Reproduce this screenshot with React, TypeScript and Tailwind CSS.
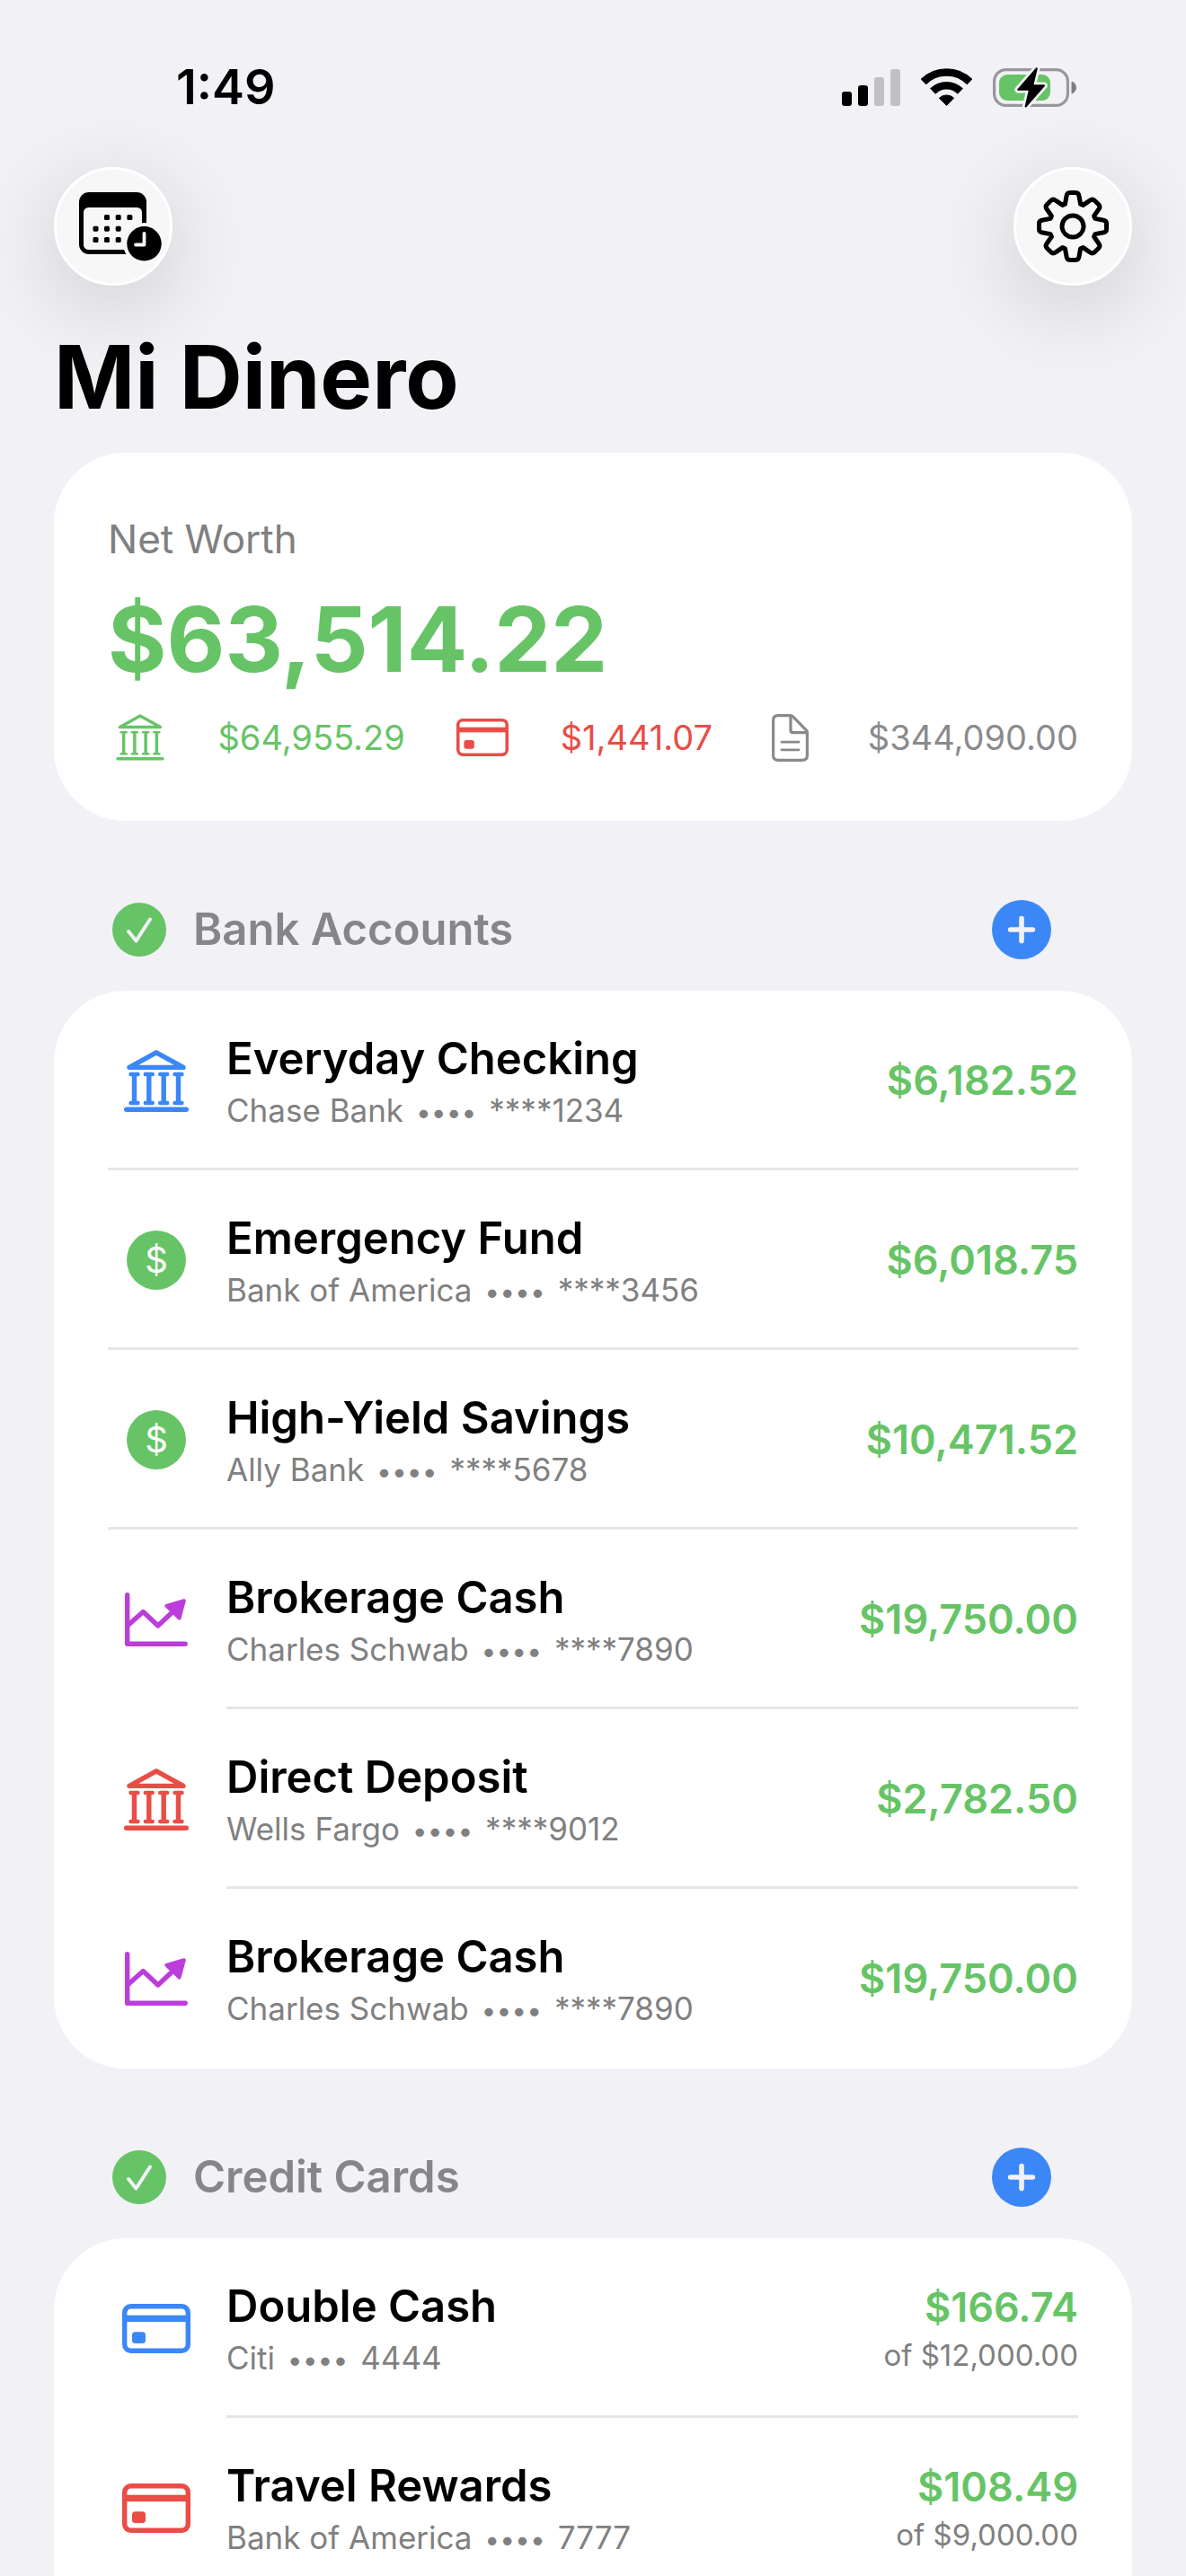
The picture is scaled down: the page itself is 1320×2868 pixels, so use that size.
import clsx from "clsx";

type IconProps = { className?: string; weight?: number };

const accounts = [
  { name: "Everyday Checking", bank: "Chase Bank", number: "****1234", amount: "$6,182.52", icon: "bank", color: "text-[#3b87f7]" },
  { name: "Emergency Fund", bank: "Bank of America", number: "****3456", amount: "$6,018.75", icon: "coin", color: "text-[#66c466]" },
  { name: "High-Yield Savings", bank: "Ally Bank", number: "****5678", amount: "$10,471.52", icon: "coin", color: "text-[#66c466]" },
  { name: "Brokerage Cash", bank: "Charles Schwab", number: "****7890", amount: "$19,750.00", icon: "chart", color: "text-[#bb3edb]", inset: true },
  { name: "Direct Deposit", bank: "Wells Fargo", number: "****9012", amount: "$2,782.50", icon: "bank", color: "text-[#ea4c46]", inset: true },
  { name: "Brokerage Cash", bank: "Charles Schwab", number: "****7890", amount: "$19,750.00", icon: "chart", color: "text-[#bb3edb]", inset: true },
];

const cards = [
  { name: "Double Cash", bank: "Citi", number: "4444", amount: "$166.74", limit: "of $12,000.00", icon: "card", color: "text-[#3b87f7]", inset: true },
  { name: "Travel Rewards", bank: "Bank of America", number: "7777", amount: "$108.49", limit: "of $9,000.00", icon: "card", color: "text-[#ea4c46]", inset: true },
];

function BankIcon({ className, weight = 5.4 }: IconProps) {
  return (
    <svg viewBox="0 0 72 69" className={className} fill="none" stroke="currentColor" strokeWidth={weight} strokeLinejoin="round" strokeLinecap="round" aria-hidden="true">
      <path d="M36 2.8 L6 19.4 H66 Z" />
      <path d="M2.7 66.3 H69.3" />
      {[11.5, 27.8, 44.2, 60.5].map((x) => (
        <g key={x}>
          <path d={`M${x} 28 V58`} />
          <path d={`M${x - 4} 27 H${x + 4} M${x - 4} 59 H${x + 4}`} strokeWidth={weight - 1} />
        </g>
      ))}
    </svg>
  );
}

function CardIcon({ className, weight = 5.4 }: IconProps) {
  return (
    <svg viewBox="0 0 76 55" className={className} fill="none" stroke="currentColor" strokeWidth={weight} aria-hidden="true">
      <rect x={weight / 2} y={weight / 2} width={76 - weight} height={55 - weight} rx="7" />
      <rect x="2" y="12.7" width="72" height="7.4" fill="currentColor" stroke="none" />
      <rect x="11" y="31.3" width="15" height="12.8" rx="3.5" fill="currentColor" stroke="none" />
    </svg>
  );
}

function ChartIcon() {
  return (
    <svg viewBox="0 0 70 60" className="w-[70px]" fill="none" stroke="currentColor" strokeWidth="5.4" strokeLinejoin="round" strokeLinecap="round" aria-hidden="true">
      <path d="M2.7 2.7 V57.2 H67.2" />
      <path d="M4 36 L20.3 21.5 L36.8 37 L56 19" />
      <path d="M46.3 14.8 L65.8 9.2 L60.6 28.6 Z" fill="currentColor" strokeWidth="4" />
    </svg>
  );
}

function DocIcon() {
  return (
    <svg viewBox="0 0 41 53" className="w-[41px]" fill="none" stroke="currentColor" strokeWidth="3.2" strokeLinejoin="round" strokeLinecap="round" aria-hidden="true">
      <path d="M7 1.6 H20.5 Q22.3 1.6 23.6 2.9 L38 17.6 Q39.4 19 39.4 21 V46 Q39.4 51.4 34 51.4 H7 Q1.6 51.4 1.6 46 V7 Q1.6 1.6 7 1.6 Z" />
      <path d="M21 2 V18 Q21 20.7 23.7 20.7 H39" />
      <path d="M11 31.2 H30 M11 39.8 H30" strokeWidth="2.8" />
    </svg>
  );
}

function CoinIcon() {
  return <span className="flex size-[66px] items-center justify-center rounded-full bg-[#66c466] text-[40px] leading-none text-white">$</span>;
}

function CalendarIcon() {
  const dots = [[31, 28], [43.7, 28], [56.4, 28], [18.5, 40.7], [31, 40.7], [43.7, 40.7], [18.5, 53], [31, 53], [43.7, 53]];
  return (
    <svg viewBox="-16 0 108 77" className="w-[108px]" aria-hidden="true">
      <rect width="75" height="69" rx="11" />
      <rect x="5" y="17" width="65" height="47" rx="5.5" fill="#f7f7f8" />
      {dots.map(([x, y]) => (
        <rect key={`${x}-${y}`} x={x - 3} y={y - 3} width="6" height="6" rx="1.6" />
      ))}
      <circle cx="72.5" cy="57.3" r="23.3" fill="#f7f7f8" />
      <circle cx="72.5" cy="57.3" r="19.2" />
      <path d="M72.5 45.8 V58.5 H63" fill="none" stroke="#f7f7f8" strokeWidth="3.8" strokeLinecap="round" strokeLinejoin="round" />
    </svg>
  );
}

// one tooth of the gear, repeated every 45 degrees
const tooth = [[-8.6, -24.8], [-7, -33.5], [-6.5, -37.5], [-3.2, -37.5], [3.2, -37.5], [6.5, -37.5], [7, -33.5], [8.6, -24.8]];

function gearPath() {
  let d = "";
  for (let i = 0; i < 8; i++) {
    const a = (i * Math.PI) / 4;
    const p = tooth.map(([x, y]) => `${(x * Math.cos(a) - y * Math.sin(a)).toFixed(2)} ${(x * Math.sin(a) + y * Math.cos(a)).toFixed(2)}`);
    d += `${i === 0 ? "M" : "L"}${p[0]} L${p[1]} Q${p[2]} ${p[3]} L${p[4]} Q${p[5]} ${p[6]} L${p[7]} `;
  }
  return d + "Z";
}

function GearIcon() {
  return (
    <svg viewBox="-40 -40 80 80" className="w-20" fill="none" stroke="black" strokeWidth="5" strokeLinejoin="round" aria-hidden="true">
      <path d={gearPath()} />
      <circle r="12" />
    </svg>
  );
}

function StatusIcons() {
  return (
    <div className="flex items-center gap-[23px]">
      <svg viewBox="0 0 65 41" className="w-[65px]" aria-hidden="true">
        <rect y="25" width="11" height="16" rx="3" />
        <rect x="18" y="18" width="11" height="23" rx="3" />
        <rect x="36" y="9" width="11" height="32" rx="3" fill="#c1c0c5" />
        <rect x="54" width="11" height="41" rx="3" fill="#c1c0c5" />
      </svg>
      <svg viewBox="0 0 57 42" className="w-[57px]" fill="none" stroke="black" aria-hidden="true">
        <path d="M2.7 15.2 A36.5 36.5 0 0 1 54.3 15.2" strokeWidth="8.6" />
        <path d="M13.1 25.6 A21.7 21.7 0 0 1 43.9 25.6" strokeWidth="8.6" />
        <path d="M28.5 41.4 L20.4 33.2 A11.6 11.6 0 0 1 36.6 33.2 Z" fill="black" strokeWidth="1" strokeLinejoin="round" />
      </svg>
      <svg viewBox="0 0 93 43" className="w-[93px] overflow-visible" aria-hidden="true">
        <rect x="1.6" y="1.6" width="81.8" height="39.8" rx="13" fill="none" stroke="#98979b" strokeWidth="3.2" />
        <path d="M88 15 A7 7 0 0 1 88 28 Z" fill="#7f7f83" stroke="#7f7f83" />
        <rect x="7" y="7" width="57" height="29" rx="9" fill="#66c466" />
        <path d="M48.8 0.2 L28.2 23.8 H41 L36.6 42.6 L57 19.3 H44.2 Z" stroke="#f2f1f6" strokeWidth="7.5" strokeLinejoin="round" />
        <path d="M48.8 0.2 L28.2 23.8 H41 L36.6 42.6 L57 19.3 H44.2 Z" stroke="black" strokeWidth="2" strokeLinejoin="round" />
      </svg>
    </div>
  );
}

function RowIcon({ icon }: { icon: string }) {
  if (icon === "bank") return <BankIcon className="w-[72px]" />;
  if (icon === "card") return <CardIcon className="w-[76px]" />;
  if (icon === "chart") return <ChartIcon />;
  return <CoinIcon />;
}

function AccountRow({ ...props }) {
  const { name, bank, number, amount, limit, icon, color, inset, last } = props;
  const line = "border-b-[3px] border-[#e6e6e6]";

  return (
    <li className={clsx("flex h-[200px] gap-6", !last && !inset && line)}>
      <div className={clsx("flex w-[108px] items-center justify-center", color, !last && !inset && "pt-[3px]")}>
        <RowIcon icon={icon} />
      </div>
      <div className={clsx("flex flex-1 items-center justify-between", !last && "pt-[3px]", !last && inset && line)}>
        <div>
          <h3 className="text-[49px] leading-[66px] font-semibold text-black">{name}</h3>
          <p className="text-[35px] leading-[48px] text-[#808080]">
            {bank} <span className="mx-1 text-[30px] leading-none">••••</span> {number}
          </p>
        </div>
        <div className="text-right">
          <p className="text-[45px] leading-[60px] font-semibold text-[#66c466]">{amount}</p>
          {limit && <p className="text-[33px] leading-[46px] text-[#808080]">{limit}</p>}
        </div>
      </div>
    </li>
  );
}

function Section({ title, rows, open }: { title: string; rows: object[]; open?: boolean }) {
  return (
    <section>
      <div className="flex items-center justify-between pt-[88px] pr-[90px] pb-[35px] pl-[65px]">
        <div className="flex items-center gap-[30px]">
          <svg viewBox="0 0 60 60" className="w-[60px]" aria-hidden="true">
            <circle cx="30" cy="30" r="30" fill="#66c466" />
            <path d="M18 32 L26.5 42.5 L42 18.5" fill="none" stroke="#f2f1f6" strokeWidth="4" strokeLinecap="round" strokeLinejoin="round" />
          </svg>
          <h2 className="text-[49px] leading-[60px] font-semibold text-[#86858a]">{title}</h2>
        </div>
        <button aria-label={`Add to ${title}`} className="rounded-full">
          <svg viewBox="0 0 66 66" className="w-[66px]" aria-hidden="true">
            <circle cx="33" cy="33" r="33" fill="#3b87f7" />
            <path d="M33 20.6 V45.4 M20.6 33 H45.4" stroke="#f2f1f6" strokeWidth="5.6" strokeLinecap="round" />
          </svg>
        </button>
      </div>
      <ul className={clsx("bg-white px-[60px]", open ? "rounded-t-[80px]" : "rounded-[80px]")}>
        {rows.map((row, i) => (
          <AccountRow key={i} {...row} last={!open && i === rows.length - 1} />
        ))}
      </ul>
    </section>
  );
}

function RoundButton({ label, children }: { label: string; children: React.ReactNode }) {
  return (
    <button aria-label={label} className="flex size-[132px] items-center justify-center rounded-full border-[3px] border-white bg-[#f7f7f8] shadow-[0_22px_100px_rgba(0,0,0,0.16)]">
      {children}
    </button>
  );
}

export default function App() {
  return (
    <div className="h-screen overflow-y-auto bg-[#f2f1f6] px-[60px] font-['Inter',sans-serif] text-black [scrollbar-width:none]">
      <div className="flex items-center justify-between pt-[66px] pr-[62px] pb-[58px] pl-[136px]">
        <span className="text-[54px] leading-[62px] font-semibold">1:49</span>
        <StatusIcons />
      </div>
      <header>
        <div className="flex justify-between">
          <RoundButton label="Scheduled">
            <CalendarIcon />
          </RoundButton>
          <RoundButton label="Settings">
            <GearIcon />
          </RoundButton>
        </div>
        <h1 className="mt-[42px] mb-6 text-[97px] leading-[120px] font-bold">Mi Dinero</h1>
      </header>
      <main>
        <section className="rounded-[80px] bg-white px-[60px] pt-[70px] pb-[67px]">
          <h2 className="text-[44px] leading-[52px] text-[#808080]">Net Worth</h2>
          <p className="mt-[26px] text-[100px] leading-[120px] font-bold text-[#66c466]">$63,514.22</p>
          <div className="mt-[23px] flex h-[52px] items-center justify-between text-[38px]">
            <span className="flex w-[72px] justify-center text-[#66c466]"><BankIcon className="w-[54px]" weight={4.6} /></span>
            <span className="text-[#66c466]">$64,955.29</span>
            <span className="flex w-[72px] justify-center text-[#ea4c46]"><CardIcon className="w-[58px]" weight={4.6} /></span>
            <span className="text-[#ea4c46]">$1,441.07</span>
            <span className="flex w-[72px] justify-center text-[#8a8a8c]"><DocIcon /></span>
            <span className="text-[#8a8a8c]">$344,090.00</span>
          </div>
        </section>
        <Section title="Bank Accounts" rows={accounts} />
        <Section title="Credit Cards" rows={cards} open />
      </main>
    </div>
  );
}
